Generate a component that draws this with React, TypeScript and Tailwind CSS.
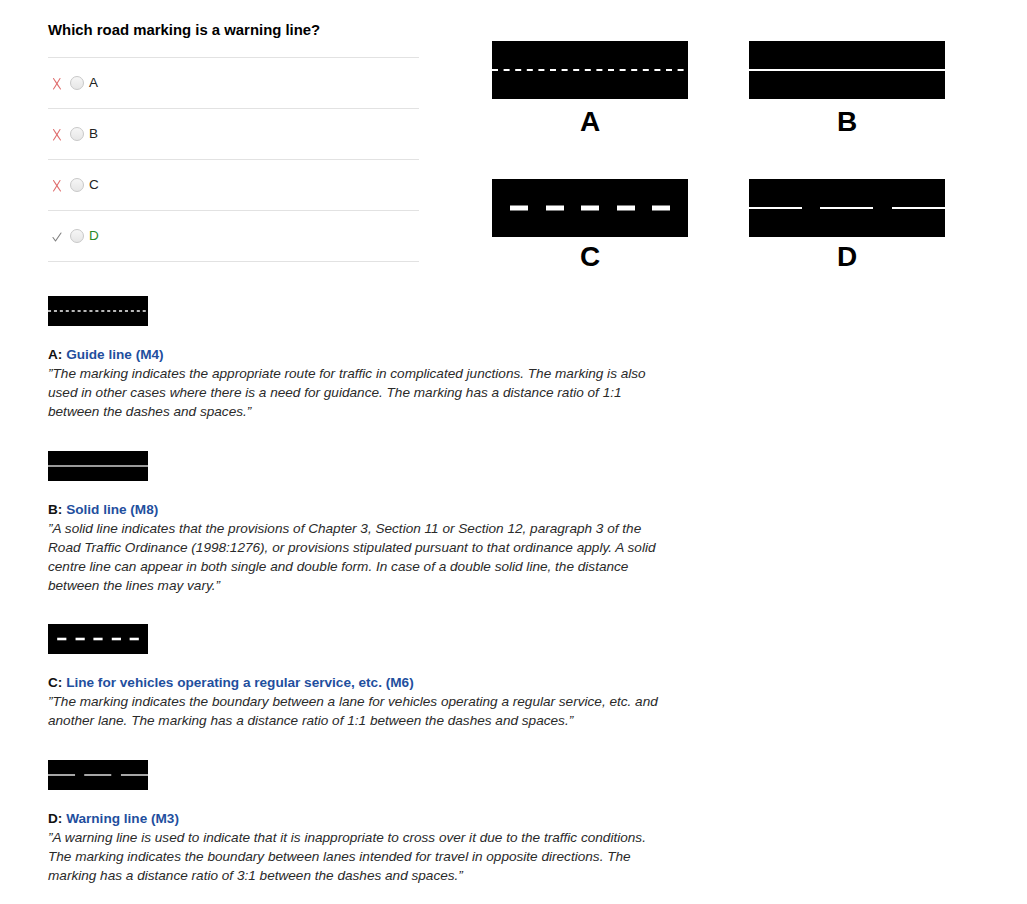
import React from "react";

type Kind = "A" | "B" | "C" | "D";

function Road({ kind, small }: { kind: Kind; small?: boolean }) {
  const thin = small ? "#b8b8b8" : "#ffffff";
  return (
    <svg
      viewBox="0 0 196 58"
      preserveAspectRatio="none"
      className="block h-full w-full"
    >
      <rect x="0" y="0" width="196" height="58" fill="#000" />
      {kind === "A" && (
        <line
          x1="0"
          y1="29"
          x2="196"
          y2="29"
          stroke={thin}
          strokeWidth={small ? 3.5 : 2}
          strokeDasharray="6 5.6"
        />
      )}
      {kind === "B" && (
        <line x1="0" y1="29" x2="196" y2="29" stroke={small ? "#9a9a9a" : "#fff"} strokeWidth={small ? 4 : 2} />
      )}
      {kind === "C" &&
        [18, 54, 89, 125, 160].map((x) => (
          <rect key={x} x={x} y={26.5} width={18} height={5} fill="#fff" />
        ))}
      {kind === "D" &&
        [
          [0, 53],
          [71, 124],
          [143, 196],
        ].map(([a, b]) => (
          <line
            key={a}
            x1={a}
            y1="29"
            x2={b}
            y2="29"
            stroke={thin}
            strokeWidth={small ? 3.5 : 2}
          />
        ))}
    </svg>
  );
}

function Cross() {
  return (
    <svg width="10" height="13" viewBox="0 0 10 13" className="block">
      <path d="M1.5 1.5 C3.5 4.5 6 8.5 8.5 12" stroke="#e07070" strokeWidth="1.1" fill="none" strokeLinecap="round" />
      <path d="M8 1.5 C6 4.5 4 8.5 1.5 12" stroke="#e07070" strokeWidth="1.1" fill="none" strokeLinecap="round" />
    </svg>
  );
}

function Check() {
  return (
    <svg width="10" height="13" viewBox="0 0 10 13" className="block">
      <path d="M1 7.5 L3.5 11 L9 3" stroke="#808080" strokeWidth="1.1" fill="none" strokeLinecap="round" strokeLinejoin="round" />
    </svg>
  );
}

const options: { letter: Kind; correct: boolean }[] = [
  { letter: "A", correct: false },
  { letter: "B", correct: false },
  { letter: "C", correct: false },
  { letter: "D", correct: true },
];

const explanations: { kind: Kind; title: string; lines: string[]; gap: string }[] = [
  {
    kind: "A",
    title: "Guide line (M4)",
    lines: [
      "”The marking indicates the appropriate route for traffic in complicated junctions. The marking is also",
      "used in other cases where there is a need for guidance. The marking has a distance ratio of 1:1",
      "between the dashes and spaces.”",
    ],
    gap: "mt-[24px]",
  },
  {
    kind: "B",
    title: "Solid line (M8)",
    lines: [
      "”A solid line indicates that the provisions of Chapter 3, Section 11 or Section 12, paragraph 3 of the",
      "Road Traffic Ordinance (1998:1276), or provisions stipulated pursuant to that ordinance apply. A solid",
      "centre line can appear in both single and double form. In case of a double solid line, the distance",
      "between the lines may vary.”",
    ],
    gap: "mt-[30px]",
  },
  {
    kind: "C",
    title: "Line for vehicles operating a regular service, etc. (M6)",
    lines: [
      "”The marking indicates the boundary between a lane for vehicles operating a regular service, etc. and",
      "another lane. The marking has a distance ratio of 1:1 between the dashes and spaces.”",
    ],
    gap: "mt-[29px]",
  },
  {
    kind: "D",
    title: "Warning line (M3)",
    lines: [
      "”A warning line is used to indicate that it is inappropriate to cross over it due to the traffic conditions.",
      "The marking indicates the boundary between lanes intended for travel in opposite directions. The",
      "marking has a distance ratio of 3:1 between the dashes and spaces.”",
    ],
    gap: "mt-[30px]",
  },
];

export default function App() {
  return (
    <div className="min-h-[904px] bg-white pl-12 pt-5 font-['Liberation_Sans',Arial,sans-serif] text-[#222]">
      <div className="flex items-start">
        <div className="w-[371px]">
          <h1 className="text-[14.9px] font-bold leading-5 text-black">
            Which road marking is a warning line?
          </h1>
          <div className="mt-[17px] border-b border-[#e2e2e2]">
            {options.map((o) => (
              <div
                key={o.letter}
                className="flex h-[51px] items-center border-t border-[#e2e2e2] pl-[4px]"
              >
                <span className="flex w-[18px] items-center">
                  {o.correct ? <Check /> : <Cross />}
                </span>
                <span className="h-[14px] w-[14px] rounded-full border border-[#c8c8c8] bg-gradient-to-b from-[#f6f6f6] to-[#e6e6e6]" />
                <span
                  className={
                    o.correct
                      ? "ml-[5px] text-[13.5px] leading-none text-[#2a8a2a]"
                      : "ml-[5px] text-[13.5px] leading-none text-[#222]"
                  }
                >
                  {o.letter}
                </span>
              </div>
            ))}
          </div>
        </div>

        <div className="ml-[73px] mt-[21px] grid grid-cols-[196px_196px] gap-x-[61px] gap-y-[42px]">
          {(["A", "B", "C", "D"] as Kind[]).map((k) => (
            <div key={k} className="flex flex-col">
              <div className="h-[58px] w-[196px]">
                <Road kind={k} />
              </div>
              <div
                className={
                  k === "A" || k === "B"
                    ? "mt-[8px] text-center text-[28px] font-bold leading-[30px] text-black"
                    : "mt-[5px] text-center text-[28px] font-bold leading-[30px] text-black"
                }
              >
                {k}
              </div>
            </div>
          ))}
        </div>
      </div>

      {explanations.map((e) => (
        <div key={e.kind} className={e.gap}>
          <div className="h-[30px] w-[100px]">
            <Road kind={e.kind} small />
          </div>
          <div className="mt-[19px] text-[13.6px] font-bold leading-[19px]">
            <span className="text-[#111]">{e.kind}: </span>
            <span className="text-[#1f4f9e]">{e.title}</span>
          </div>
          <p className="text-[13.6px] italic leading-[19px] text-[#2a2a2a]">
            {e.lines.map((l, i) => (
              <React.Fragment key={i}>
                {l}
                {i < e.lines.length - 1 && <br />}
              </React.Fragment>
            ))}
          </p>
        </div>
      ))}
    </div>
  );
}
